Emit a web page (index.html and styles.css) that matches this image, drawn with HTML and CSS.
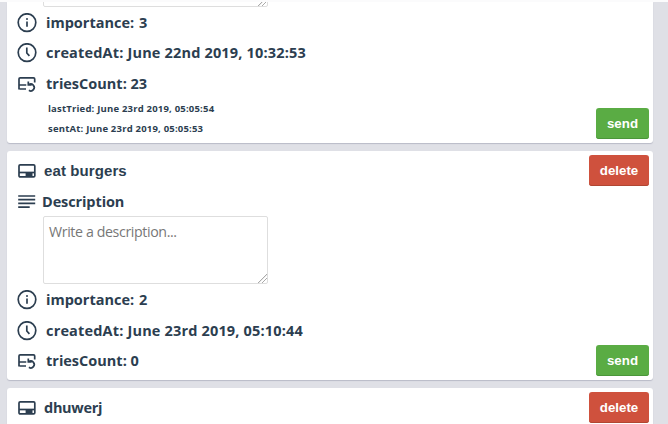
FILE: index.html
```html
<!DOCTYPE html>
<html lang="en">
<head>
<meta charset="utf-8">
<title>Tasks</title>
<link rel="stylesheet" href="styles.css">
</head>
<body>
<svg class="sprite" aria-hidden="true">
  <symbol id="info" viewBox="0 0 20 20"><circle cx="10" cy="9.600" r="8.800"/><path d="M10 8.400v5.400"/><circle class="dot" cx="10" cy="5.900" r="1"/></symbol>
  <symbol id="clock" viewBox="0 0 20 20"><circle cx="10" cy="9.600" r="8.800"/><path d="M9.800 4.600v5.400l2.600 2.900"/></symbol>
  <symbol id="tries" viewBox="0 0 20 20"><path d="M9 15H2.600M2 11h7.300M2 15.600V5a1.200 1.200 0 0 1 1.200-1.200h13.300A1.200 1.200 0 0 1 17.700 5v3.500"/><path d="M11.300 7.600v3.400h3.400M11.700 10.800a3.400 3.400 0 1 1 .2 5.500"/></symbol>
  <symbol id="card" viewBox="0 0 20 20"><rect x="2" y="3.900" width="15.800" height="12" rx="1.200"/><path d="M2 11.500h15.600"/><path class="dot" d="M8.600 11.600h6.900V15H8.600z"/></symbol>
  <symbol id="lines" viewBox="0 0 20 20"><path d="M1.200 4h17M1.200 7.700h17M1.200 11.400h17M1.200 15.100h11.500"/></symbol>
</svg>
<main class="list">
  <article class="card card-first">
    <div class="content">
      <textarea class="description" placeholder="Write a description..."></textarea>
      <div class="row"><svg class="icon"><use href="#info"/></svg><span class="label importance">importance: 3</span></div>
      <div class="row"><svg class="icon"><use href="#clock"/></svg><span class="label created">createdAt: June 22nd 2019, 10:32:53</span></div>
      <div class="row"><svg class="icon"><use href="#tries"/></svg><span class="label">triesCount: 23</span></div>
      <div class="detail"><span>lastTried: June 23rd 2019, 05:05:54</span></div>
      <div class="detail"><span>sentAt: June 23rd 2019, 05:05:53</span></div>
    </div>
    <div class="actions"><button class="button send">send</button></div>
  </article>
  <article class="card">
    <div class="content">
      <div class="row row-title"><svg class="icon"><use href="#card"/></svg><span class="title">eat burgers</span></div>
      <div class="row row-heading"><svg class="icon"><use href="#lines"/></svg><span class="heading">Description</span></div>
      <textarea class="description" placeholder="Write a description..."></textarea>
      <div class="row"><svg class="icon"><use href="#info"/></svg><span class="label importance">importance: 2</span></div>
      <div class="row"><svg class="icon"><use href="#clock"/></svg><span class="label created">createdAt: June 23rd 2019, 05:10:44</span></div>
      <div class="row"><svg class="icon"><use href="#tries"/></svg><span class="label">triesCount: 0</span></div>
    </div>
    <div class="actions"><button class="button delete">delete</button><button class="button send">send</button></div>
  </article>
  <article class="card card-last">
    <div class="content">
      <div class="row row-title"><svg class="icon"><use href="#card"/></svg><span class="title title-wide">dhuwerj</span></div>
    </div>
    <div class="actions"><button class="button delete">delete</button></div>
  </article>
</main>
</body>
</html>
```
FILE: styles.css
```css
* { box-sizing: border-box; }
body {
  margin: 0;
  height: 424px;
  overflow: hidden;
  background: #dfe0e6;
  border-top: 2px solid #fbfbfc;
  color: #2c3e50;
  font-family: "Open Sans", "Noto Sans", sans-serif;
}
.sprite { display: none; }
.list {
  display: flex;
  flex-direction: column;
  gap: 8px;
  padding: 0 15px 0 7px;
}
.card {
  display: flex;
  flex-shrink: 0;
  justify-content: space-between;
  padding: 4px 4px 4px 10px;
  height: 229px;
  background: #fff;
  border-radius: 3px;
  box-shadow: 0 1px 1px #b9bbc7;
}
.card-first {
  height: 141px;
  padding-top: 0;
  border-radius: 0 0 3px 3px;
  overflow: hidden;
}
.card-last {
  height: 36px;
  padding-bottom: 0;
  border-radius: 3px 3px 0 0;
}
.card-first .content { justify-content: flex-end; }
.content { display: flex; flex-direction: column; }
.row {
  display: flex;
  flex-shrink: 0;
  align-items: center;
  height: 30.5px;
}
.row-title, .row-heading { height: 31px; }
.icon {
  width: 20px;
  height: 20px;
  margin-right: 9px;
  fill: none;
  stroke: #2c3e50;
  stroke-width: 1.7;
}
.dot { fill: #2c3e50; stroke: none; }
.row-title .icon { margin-right: 7px; }
.row-heading .icon { margin-right: 5px; }
.label, .heading, .title {
  font-size: 14.500px;
  line-height: 20px;
  font-weight: 700;
  white-space: nowrap;
}
.heading { letter-spacing: -0.1px; }
.importance { word-spacing: 1px; }
.created { letter-spacing: 0.17px; }
.title { font: 700 15px/20px "Liberation Sans", sans-serif; letter-spacing: 0.1px; }
.title-wide {
  font-family: "Open Sans", sans-serif;
  font-size: 14.500px;
  letter-spacing: -0.3px;
}
.detail {
  flex-shrink: 0;
  height: 20px;
  padding-left: 31px;
  font-size: 9.500px;
  line-height: 19px;
  font-weight: 700;
  letter-spacing: 0.2px;
  white-space: nowrap;
}
.description {
  flex-shrink: 0;
  width: 225px;
  height: 68px;
  margin: -1px 0 1px 26px;
  padding: 5px;
  border: 1px solid #dedede;
  border-radius: 2px;
  font: 14.200px/20px "Open Sans", sans-serif;
  letter-spacing: -0.38px;
  resize: both;
}
.description::placeholder { color: #777; }
.description::-webkit-resizer {
  background: linear-gradient(135deg, transparent 48%, #aaa 49% 54%, transparent 56% 69%, #aaa 70% 75%, transparent 77%) right bottom / 9px 9px no-repeat;
}
.actions {
  display: flex;
  flex-direction: column;
  justify-content: space-between;
  align-items: flex-end;
}
.card-first .actions { justify-content: flex-end; }
.button {
  height: 31px;
  padding: 0;
  border: 0;
  border-radius: 3px;
  color: #fff;
  font: 700 13.300px/31px "Liberation Sans", sans-serif;
}
.send { width: 53px; background: #5aac44; box-shadow: inset 0 -1px #4b963a; }
.delete { width: 60px; background: #cf513d; box-shadow: inset 0 -1px #b04632; }
```
